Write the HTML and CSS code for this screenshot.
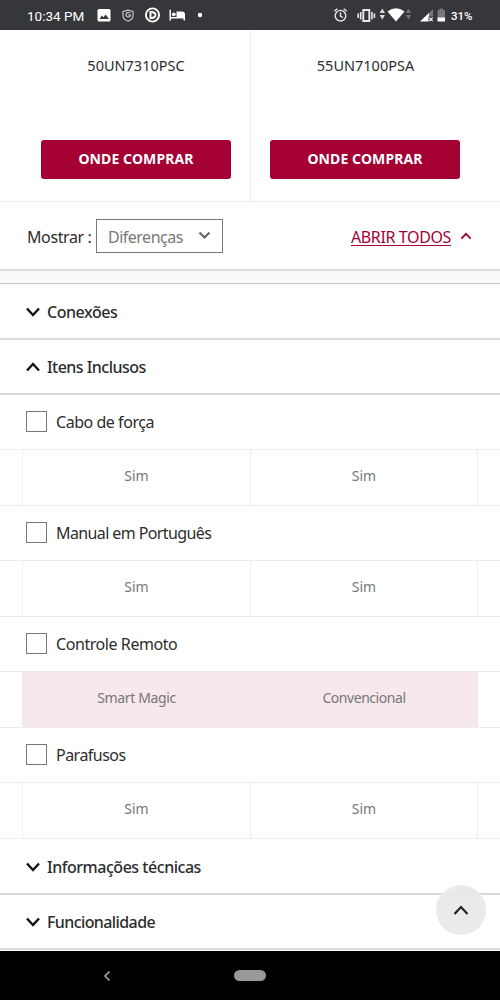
FILE: index.html
```
<!DOCTYPE html>
<html lang="pt-BR">
<head>
<meta charset="utf-8">
<title>Comparar produtos</title>
<link rel="stylesheet" href="styles.css">
</head>
<body>
<div class="screen">
  <header class="status">
    <span class="clock">10:34 PM</span>
    <svg class="status-left" width="108" height="30" viewBox="0 0 108 30">
      <path fill="#fff" fill-rule="evenodd" d="M2 9h10q1.500 0 1.500 1.500v9.500q0 1.500-1.500 1.500H2Q.5 21.500.5 20v-9.500Q.5 9 2 9zM2.500 19h9.500l-3.300-4.500-2.200 2.800-1.600-1.800z"/>
      <path fill="none" stroke="#c4c4c6" stroke-width="1.200" d="M31 10.200l5 1.300v4.500q0 3.300-5 5.200-5-2-5-5.200v-4.500zM33.500 13q-4-1.500-4.500 1.500 0 2.500 3 2.500 1.500-.3 1.500-2h-2.500"/>
      <circle cx="55.500" cy="15" r="6.600" fill="none" stroke="#fff" stroke-width="1.900"/>
      <path fill="#fff" d="M52.500 11h3q4 .8 4 4t-4 4h-3z"/>
      <path fill="#36373b" d="M54.500 12.500l3.600 2.500-3.600 2.500z"/>
      <path fill="#fff" d="M72.500 9.800H74V17h5.500v-5.500H85q3 0 3 3v6h-1.500v-2H74v2h-1.500z"/>
      <circle cx="76.800" cy="14.300" r="1.900" fill="#fff"/>
      <circle cx="103" cy="15" r="2.200" fill="#fff"/>
    </svg>
    <svg class="status-right" width="115" height="30" viewBox="333 0 115 30">
      <g fill="none" stroke="#e8e8e8" stroke-width="1.400">
        <circle cx="340.500" cy="15.700" r="5.300"/>
        <path d="M334.300 11.300l3-2.500M346.700 11.300l-3-2.500M340.500 12.500v3.500l2.500 1.500"/>
        <path stroke-width="1.900" d="M363.300 10h6v11h-6z"/>
        <path stroke-width="1.600" d="M360.700 12v7.500M358.200 13.500v4.500M371.900 12v7.500M374.400 13.500v4.500"/>
      </g>
      <path fill="#ddd" d="M382.300 8.500l2.700 4.500h-5.400zM382.300 19.500l2.700-4.500h-5.400z"/>
      <path fill="#fff" d="M387.500 11.500q8.500-6.500 17 0L396 21.500z"/>
      <path fill="#77777b" d="M408.500 8.500l2.500 4.500h-5zM408.500 19.500l2.500-4.500h-5z"/>
      <path fill="#77777b" d="M433 9v12h-12z"/>
      <path fill="#fff" d="M429 13v8.500h-9z"/>
      <path fill="#36373b" d="M428.500 16.500h5v5.500h-5z"/>
      <path fill="none" stroke="#fff" stroke-width="1.200" d="M429.300 17.700l3.400 3.400M432.700 17.700l-3.400 3.400"/>
      <path fill="#77777b" d="M437.500 10h2V8.500h3.500V10h2v8h-7.500z"/>
      <path fill="#fff" d="M437.500 17.500h7.500v4h-7.500z"/>
    </svg>
    <span class="battery">31%</span>
  </header>

  <section class="products">
    <div class="product"><p class="model">50UN7310PSC</p><button class="buy">ONDE COMPRAR</button></div>
    <div class="product"><p class="model">55UN7100PSA</p><button class="buy">ONDE COMPRAR</button></div>
  </section>

  <section class="toolbar">
    <span class="show">Mostrar :</span>
    <div class="select"><span class="select-text">Diferenças</span>
      <svg width="13" height="9" viewBox="0 0 13 9"><path class="chev grey" d="M1.500 1.500l5 5 5-5"/></svg>
    </div>
    <a class="open-all">ABRIR TODOS</a>
    <svg class="open-icon" width="12" height="8" viewBox="0 0 12 8"><path class="chev red" d="M1.300 6.700L6 1.800l4.700 4.900"/></svg>
  </section>
  <div class="gap"></div>

  <main class="specs">
    <h2 class="group"><svg width="14" height="10" viewBox="0 0 14 10"><path class="chev" d="M1 1.500l6 6.500 6-6.500"/></svg><span class="t-con">Conexões</span></h2>
    <h2 class="group open"><svg width="14" height="10" viewBox="0 0 14 10"><path class="chev" d="M1 8.500L7 2l6 6.500"/></svg><span class="t-itens">Itens Inclusos</span></h2>

    <h3 class="item"><i class="box"></i><span class="t-cabo">Cabo de força</span></h3>
    <div class="row"><span class="cell">Sim</span><span class="cell">Sim</span></div>
    <h3 class="item"><i class="box"></i><span class="t-manual">Manual em Português</span></h3>
    <div class="row"><span class="cell">Sim</span><span class="cell">Sim</span></div>
    <h3 class="item"><i class="box"></i><span class="t-controle">Controle Remoto</span></h3>
    <div class="row diff"><span class="cell t-smart">Smart Magic</span><span class="cell t-conv">Convencional</span></div>
    <h3 class="item"><i class="box"></i><span class="t-para">Parafusos</span></h3>
    <div class="row"><span class="cell">Sim</span><span class="cell">Sim</span></div>

    <h2 class="group"><svg width="14" height="10" viewBox="0 0 14 10"><path class="chev" d="M1 1.500l6 6.500 6-6.500"/></svg><span class="t-info">Informações técnicas</span></h2>
    <h2 class="group"><svg width="14" height="10" viewBox="0 0 14 10"><path class="chev" d="M1 1.500l6 6.500 6-6.500"/></svg><span class="t-func">Funcionalidade</span></h2>
  </main>

  <button class="to-top" aria-label="Voltar ao topo"><svg width="16" height="11" viewBox="0 0 16 11"><path class="chev top" d="M1.500 9L8 2l6.500 7"/></svg></button>

  <nav class="nav">
    <svg class="back" width="8" height="12" viewBox="0 0 8 12"><path d="M6.500 1.500L2 6l4.500 4.500"/></svg>
    <span class="pill"></span>
  </nav>
</div>
</body>
</html>
```
FILE: styles.css
```
* { box-sizing: border-box; }
body { margin: 0; background: #fff; font-family: "Noto Sans", sans-serif; color: #2d2d2d; }
h2, h3, p { margin: 0; font-weight: 400; }
svg { display: block; flex: none; }
button { border: 0; padding: 0; font-family: inherit; }
.screen { position: relative; width: 500px; height: 1000px; overflow: hidden; display: flex; flex-direction: column; white-space: nowrap; }

.status { height: 30px; flex: none; background: #36373b; color: #fff; display: flex; align-items: center; font-family: Roboto, sans-serif; }
.clock { width: 70px; margin-left: 27px; padding-top: 2px; font-size: 13.500px; font-weight: 400; line-height: 30px; }
.status-right { margin-left: 128px; }
.battery { margin-left: 3px; padding-top: 1px; font-size: 11.500px; font-weight: 500; line-height: 30px; }

.products { height: 172px; flex: none; display: grid; grid-template-columns: 250px 250px; border-bottom: 1px solid #ececec; }
.product { padding: 24px 19px 0 41px; }
.product + .product { padding: 24px 39px 0 19px; border-left: 1px solid #ececec; }
.model { height: 86px; line-height: 23px; font-size: 14.500px; text-align: center; }
.buy { width: 190px; height: 39px; border-radius: 3px; background: #a50034; color: #fff; font-size: 14px; font-weight: 700; letter-spacing: 0.1px; display: block; line-height: 37px; padding-bottom: 2px; }

.toolbar { height: 69px; flex: none; display: flex; align-items: center; padding: 0 28px 0 27px; border-bottom: 2px solid #dcdcdc; font-size: 16px; }
.show { width: 69px; padding-top: 3px; letter-spacing: -0.400px; }
.select { width: 127px; height: 34px; border: 1px solid #777; display: flex; align-items: center; padding: 0 11px; color: #777; justify-content: space-between; }
.select-text { padding-top: 3px; letter-spacing: -0.500px; }
.open-all { margin-left: auto; padding-top: 3px; color: #a50034; text-decoration: underline; text-underline-offset: 2px; letter-spacing: -0.370px; }
.open-icon { margin-left: 9px; margin-top: 1px; }
.chev { fill: none; stroke: #111; stroke-width: 2.400; }
.chev.grey { stroke: #666; stroke-width: 2.200; }
.chev.red { stroke: #a50034; stroke-width: 1.800; }
.chev.top { stroke: #222; stroke-width: 2.200; }
.gap { height: 13px; flex: none; background: #fafafa; border-bottom: 1px solid #c8c8c8; }

.specs { flex: none; }
.group { height: 56px; display: flex; align-items: center; gap: 7px; padding: 1px 0 0 26px; border-bottom: 2px solid #dadada; font-size: 16px; font-weight: 500; }
.group.open, .group:last-child { height: 55px; }
.item { height: 54px; display: flex; align-items: center; gap: 9px; padding-left: 26px; font-size: 16px; }
.box { width: 21px; height: 21px; border: 1px solid #777; flex: none; margin-top: -1px; }
.row { height: 57px; display: grid; grid-template-columns: 228px 228px; padding-left: 22px; border: 1px solid #ececec; border-width: 1px 0; }
.cell { border-left: 1px solid #eee; text-align: center; line-height: 51px; font-size: 14px; color: #777; }
.cell:last-child { border-right: 1px solid #eee; }
.diff .cell { background: #f6e8ec; border-color: #f3e6ea; }

.t-con { letter-spacing: -0.450px; }
.t-itens { letter-spacing: -0.540px; }
.t-cabo { letter-spacing: -0.460px; }
.t-manual { letter-spacing: -0.600px; }
.t-controle { letter-spacing: -0.430px; }
.t-para { letter-spacing: -0.520px; }
.t-smart { letter-spacing: -0.350px; }
.t-conv { letter-spacing: -0.450px; }
.t-info { letter-spacing: -0.470px; }
.t-func { letter-spacing: -0.600px; }

.to-top { position: absolute; left: 436px; top: 885px; width: 50px; height: 50px; border-radius: 50%; background: rgba(232, 232, 232, 0.92); display: grid; place-items: center; }
.nav { height: 49px; margin-top: auto; flex: none; background: #000; display: flex; align-items: center; }
.back { margin-left: 103px; }
.back path { fill: none; stroke: #aaa; stroke-width: 1.600; }
.pill { width: 32px; height: 11px; border-radius: 6px; background: #999; margin-left: 123px; }
```
